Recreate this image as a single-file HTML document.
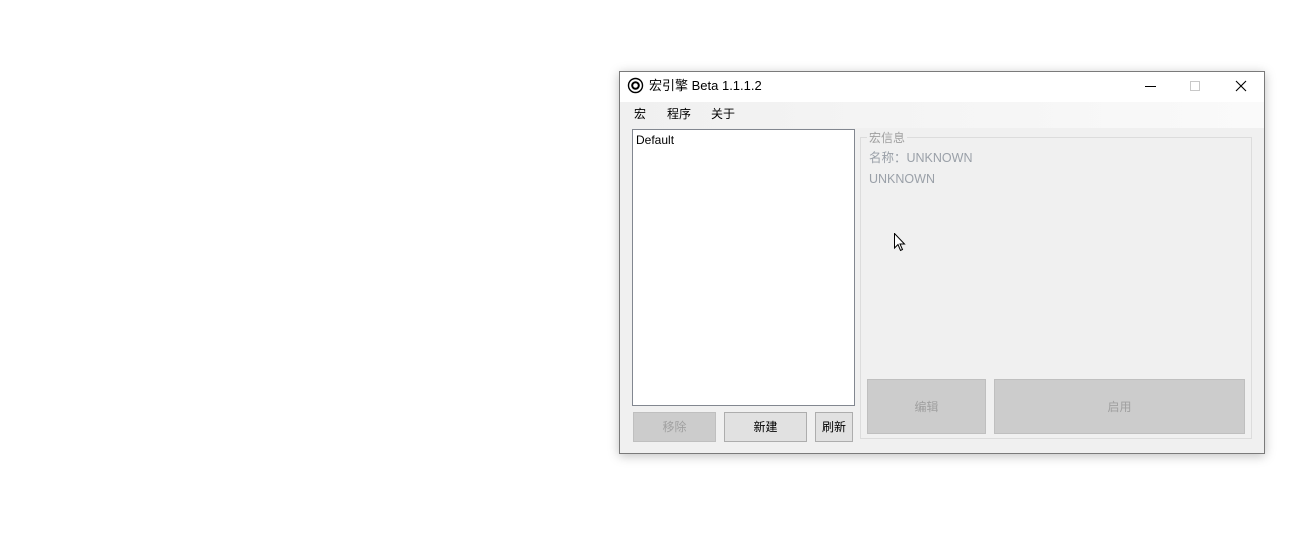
<!DOCTYPE html><html><head><meta charset="utf-8"><style>
body{margin:0;width:1306px;height:548px;background:#fff;position:relative;overflow:hidden;font-family:"Liberation Sans","Noto Sans CJK SC",sans-serif;font-size:12px;line-height:16px}
.a{position:absolute;box-sizing:border-box}
.btn{position:absolute;box-sizing:border-box;border:1px solid #adadad;background:#e1e1e1;display:flex;align-items:center;justify-content:center;font-size:12px}
.dis{background:#cccccc;border-color:#bfbfbf;color:#a0a0a0}
</style></head><body>
<div class="a" style="left:619px;top:71px;width:646px;height:383px;border:1px solid #7a7a7a;background:#f0f0f0;box-shadow:0 2px 10px rgba(0,0,0,0.25)">
<div class="a" style="left:0;top:0;width:644px;height:30px;background:#fff"></div>
<div class="a" style="left:0;top:30px;width:644px;height:26px;background:linear-gradient(90deg,#f0f0f0,#fafafa)"></div>
</div>
<svg class="a" style="left:627px;top:77px" width="17" height="17" viewBox="0 0 17 17"><circle cx="8.5" cy="8.5" r="7" fill="none" stroke="#000" stroke-width="1.4"/><circle cx="8.5" cy="8.5" r="3.3" fill="none" stroke="#000" stroke-width="2"/></svg>
<div class="a" style="left:649px;top:77px;font-size:13px;line-height:18px">宏引擎 Beta 1.1.1.2</div>
<div class="a" style="left:1145px;top:86px;width:11px;height:1px;background:#000"></div>
<div class="a" style="left:1190px;top:81px;width:10px;height:10px;border:1px solid #c8c8c8"></div>
<svg class="a" style="left:1235px;top:80px" width="12" height="12"><path d="M1 1L11 11M11 1L1 11" stroke="#000" stroke-width="1.1"/></svg>
<div class="a" style="left:634px;top:106px">宏</div>
<div class="a" style="left:667px;top:106px">程序</div>
<div class="a" style="left:711px;top:106px">关于</div>
<div class="a" style="left:632px;top:129px;width:223px;height:277px;background:#fff;border:1px solid #828790"></div>
<div class="a" style="left:636px;top:132px">Default</div>
<div class="btn dis" style="left:633px;top:412px;width:83px;height:30px">移除</div>
<div class="btn" style="left:724px;top:412px;width:83px;height:30px">新建</div>
<div class="btn" style="left:815px;top:412px;width:38px;height:30px">刷新</div>
<div class="a" style="left:860px;top:137px;width:392px;height:302px;border:1px solid #dcdcdc"></div>
<div class="a" style="left:867px;top:130px;background:#f0f0f0;color:#a0a0a0;padding:0 2px">宏信息</div>
<div class="a" style="left:869px;top:150px;color:#9aa0a8;font-size:12.5px">名称：UNKNOWN</div>
<div class="a" style="left:869px;top:171px;color:#9aa0a8;font-size:12.5px">UNKNOWN</div>
<div class="btn dis" style="left:867px;top:379px;width:119px;height:55px">编辑</div>
<div class="btn dis" style="left:994px;top:379px;width:251px;height:55px">启用</div>
<svg class="a" style="left:894px;top:233px" width="13" height="19"><path d="M0.5 0.5L0.5 15L4 11.5L6.5 17.5L8.5 16.5L6 11L10.5 11Z" fill="#fff" stroke="#000"/></svg>
</body></html>
